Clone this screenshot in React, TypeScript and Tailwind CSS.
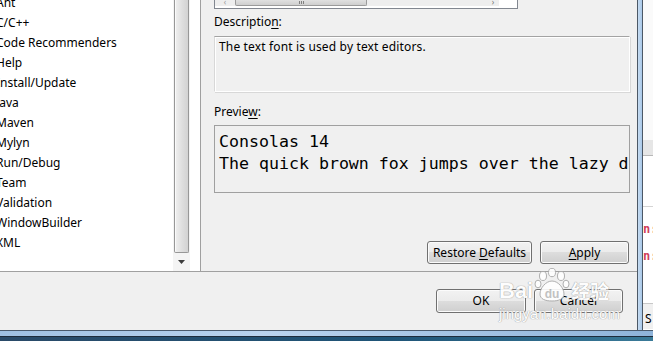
const treeItems = [
  "Ant",
  "C/C++",
  "Code Recommenders",
  "Help",
  "Install/Update",
  "Java",
  "Maven",
  "Mylyn",
  "Run/Debug",
  "Team",
  "Validation",
  "WindowBuilder",
  "XML",
];

const ui = "font-['Noto_Sans','Liberation_Sans',sans-serif]";
const btn =
  "flex h-[23px] items-center justify-center rounded-[3px] border border-[#707070] bg-[linear-gradient(#f2f2f2_0%,#ebebeb_50%,#dddddd_50%,#cfcfcf_100%)] text-[12px] text-black shadow-[inset_0_0_0_1px_#fbfbfb]";

function TreeScrollbar() {
  return (
    <div className="flex w-[17px] flex-col bg-[#f4f4f4]">
      <div className="flex-1 px-[1px]">
        <div className="h-full rounded-b-[2px] border border-t-0 border-[#979797] bg-[linear-gradient(to_right,#f0f0f0,#dedede_55%,#d2d2d2)] shadow-[inset_1px_0_0_#fafafa]" />
      </div>
      <div className="flex h-[18px] items-center justify-center">
        <svg width="7" height="4" viewBox="0 0 7 4">
          <path d="M0 0h7L3.5 4z" fill="#3c3c3c" />
        </svg>
      </div>
    </div>
  );
}

function PreferenceTree() {
  return (
    <div className="flex w-[201px] shrink-0 border-r border-[#a0a0a0] bg-white">
      <div className="w-[173px] overflow-hidden">
        <div className="-mt-[7px] -ml-[4px]">
          {treeItems.map((item) => (
            <div key={item} className="flex h-[20px] items-center whitespace-nowrap text-[12px] text-black">
              {item}
            </div>
          ))}
        </div>
      </div>
      <TreeScrollbar />
      <div className="w-[10px]" />
    </div>
  );
}

function TopTable() {
  // only the bottom of a table shows here, with its horizontal scrollbar
  return (
    <div className="flex h-[9px] w-[304px] border border-t-0 border-[#828790] bg-white">
      <div className="flex h-[6px] w-[284px] items-end bg-[#eeeeee]">
        <div className="flex h-[6px] w-[20px] items-start justify-center text-[8px] leading-[4px] text-[#9a9a9a]">‹</div>
        <div className="flex h-[6px] w-[132px] items-end justify-center rounded-b-[2px] border border-t-0 border-[#9b9b9b] bg-[linear-gradient(#e0e0e0,#cfcfcf)]">
          <div className="mb-[1px] flex gap-[1px]">
            <div className="h-[3px] w-px bg-[#808080]" />
            <div className="h-[3px] w-px bg-[#808080]" />
            <div className="h-[3px] w-px bg-[#808080]" />
          </div>
        </div>
        <div className="flex-1" />
        <div className="flex h-[6px] w-[12px] items-start justify-center text-[8px] leading-[4px] text-[#707070]">›</div>
      </div>
    </div>
  );
}

function PreferencePage() {
  return (
    <div className="flex min-w-0 flex-1 flex-col bg-[#f0f0f0] pl-[13px] pr-[7px]">
      <TopTable />
      <div className="mt-[5px] h-[16px] text-[12px] leading-[16px] text-black">
        Descriptio<span className="underline underline-offset-2">n</span>:
      </div>
      <div className="mt-[6px] h-[56px] border border-t-[#a3a3a3] border-l-[#d8d8d8] border-r-white border-b-white pl-[4px] pt-[2px] text-[12px] leading-[16px] tracking-[0.15px] shadow-[1px_1px_0_#d8d8d8,inset_1px_1px_0_#ffffff]">
        The text font is used by text editors.
      </div>
      <div className="mt-[12px] h-[16px] text-[12px] leading-[16px] text-black">
        Previe<span className="underline underline-offset-2">w</span>:
      </div>
      <div className="mt-[5px] h-[68px] overflow-hidden whitespace-nowrap border border-[#a0a0a0] pl-[4px] pt-[5px] font-['DejaVu_Sans_Mono','Liberation_Mono',monospace] text-[16.6px] leading-[22px] text-black">
        <div>Consolas 14</div>
        <div>The quick brown fox jumps over the lazy dog</div>
      </div>
      <div className="mt-auto flex justify-end gap-[8px] pb-[7px] pr-[1px]">
        <button className={`${btn} w-[105px]`}>
          <span>
            Restore <span className="underline underline-offset-2">D</span>efaults
          </span>
        </button>
        <button className={`${btn} w-[89px]`}>
          <span>
            <span className="underline underline-offset-2">A</span>pply
          </span>
        </button>
      </div>
    </div>
  );
}

function BackgroundStrip() {
  return (
    <div className="flex w-[10px] flex-col bg-white text-[12px] font-bold">
      <div className="h-[140px] bg-[#fafafa]" />
      <div className="h-[16px] border-b border-[#b8b8b8] bg-[#e6e6e6]" />
      <div className="h-[51px] border-b border-[#d4d4d4] bg-white" />
      <div className="flex h-[96px] flex-col overflow-hidden pt-[14px] font-['DejaVu_Sans_Mono',monospace] text-[#d0405a]">
        <div className="h-[27px] leading-[16px]">n:</div>
        <div className="h-[27px] leading-[16px]">n:</div>
      </div>
      <div className="flex h-[26px] items-end border-t border-[#c8c8c8] bg-[#f0f0f0] pb-[1px] pl-[2px] font-normal text-black">
        S
      </div>
    </div>
  );
}

function Watermark() {
  const glow = "[text-shadow:0_0_1px_#9a9a9a,0_0_1px_#9a9a9a]";
  return (
    <div className="pointer-events-none absolute left-[499px] top-[268px] flex flex-col items-start text-white opacity-90">
      <div className="flex items-end">
        <span className={`font-['Liberation_Sans',sans-serif] text-[22px] font-bold leading-[22px] ${glow}`}>Bai</span>
        <svg width="40" height="34" viewBox="0 0 40 34" className="-mx-[1px]">
          <g fill="#ffffff" stroke="#a8a8a8" strokeWidth="1">
            <ellipse cx="11" cy="8" rx="3.5" ry="4.5" />
            <ellipse cx="20" cy="4.5" rx="3.5" ry="4.2" />
            <ellipse cx="29" cy="8" rx="3.5" ry="4.5" />
            <ellipse cx="6" cy="16" rx="3" ry="3.8" />
            <ellipse cx="34" cy="16" rx="3" ry="3.8" />
            <path d="M20 13c-6 0-12 7-12 13 0 5 5 7 12 7s12-2 12-7c0-6-6-13-12-13z" />
          </g>
          <text x="20" y="30" textAnchor="middle" fontSize="12" fontWeight="700" fill="#bdbdbd" fontFamily="Liberation Sans, sans-serif">
            du
          </text>
        </svg>
        <span className={`font-['Noto_Sans_CJK_SC',sans-serif] text-[19px] font-bold leading-[22px] ${glow}`}>经验</span>
      </div>
      <span className={`mt-[4px] font-['Liberation_Sans',sans-serif] text-[15px] leading-[16px] ${glow}`}>jingyan.baidu.com</span>
    </div>
  );
}

export default function App() {
  return (
    <div className={`relative flex h-[341px] w-[653px] flex-col overflow-hidden bg-[#f0f0f0] ${ui}`}>
      <div className="flex h-[330px]">
        <div className="flex w-[637px] shrink-0 flex-col bg-[#f0f0f0]">
          <div className="flex h-[272px] border-b border-[#a0a0a0]">
            <PreferenceTree />
            <PreferencePage />
          </div>
          <div className="flex flex-1 justify-end gap-[8px] pr-[14px] pt-[17px]">
            <button className={`${btn} h-[24px] w-[90px]`}>OK</button>
            <button className={`${btn} h-[24px] w-[89px]`}>Cancel</button>
          </div>
        </div>
        <div className="w-[6px] shrink-0 border-x border-x-[#4c5866] bg-[linear-gradient(to_right,#c6dcf2,#a9c8e8)]" />
        <BackgroundStrip />
      </div>
      <div className="h-px bg-[#4a5a6c]" />
      <div className="h-[5px] bg-[linear-gradient(to_right,#9fc0e2,#b9d3ee_40%,#8fb4da)]" />
      <div className="h-px bg-[#1d2c3c]" />
      <div className="flex-1 bg-[linear-gradient(to_right,#2a4a68,#1f5578_60%,#3a7a98)]" />
      <Watermark />
    </div>
  );
}
